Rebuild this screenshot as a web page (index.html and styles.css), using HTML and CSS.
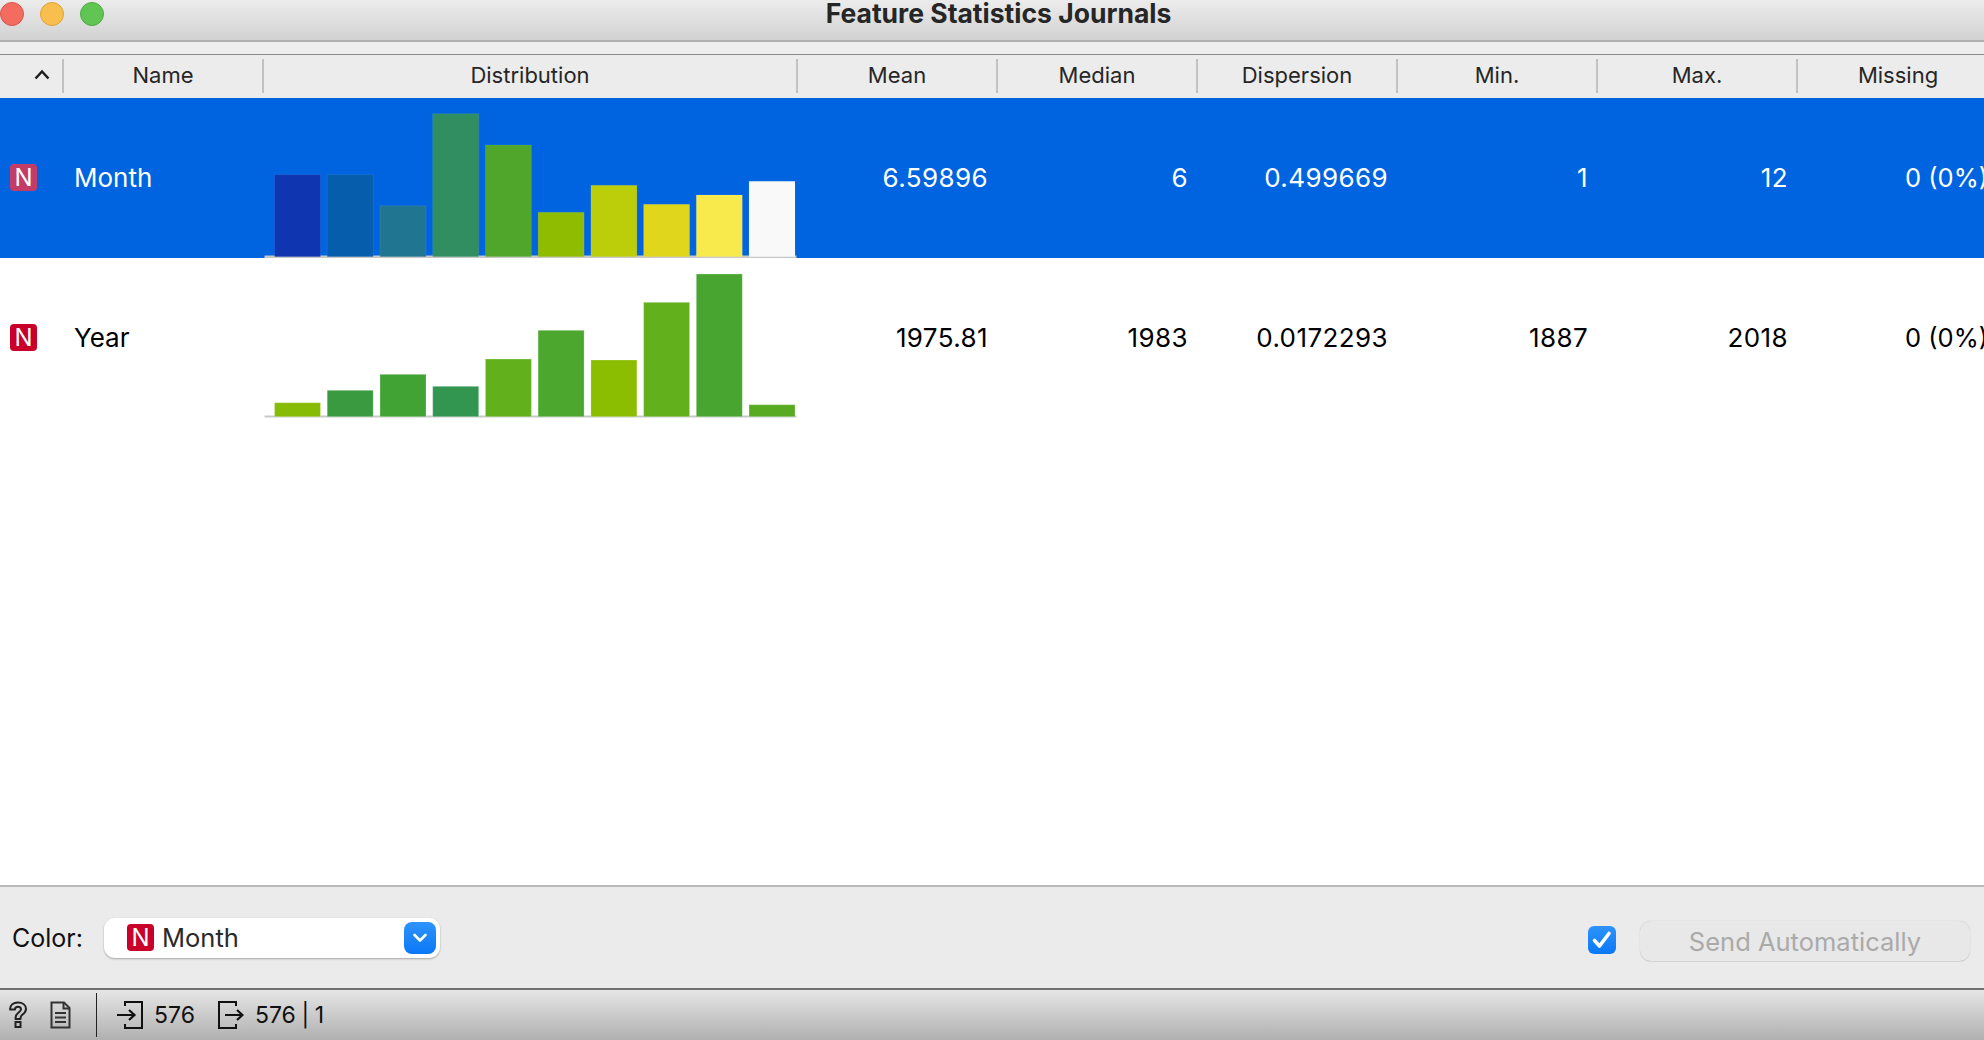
FILE: index.html
```html
<!DOCTYPE html>
<html lang="en">
<head>
<meta charset="utf-8">
<title>Feature Statistics Journals</title>
<link rel="stylesheet" href="styles.css">
</head>
<body>
<div class="window">
  <header class="titlebar">
    <div class="lights">
      <span class="light red"></span>
      <span class="light yellow"></span>
      <span class="light green"></span>
    </div>
    <h1 class="title">Feature Statistics Journals</h1>
  </header>
  <div class="strip"></div>
  <div class="cols thead">
    <div class="th sort"><svg width="16" height="11" viewBox="0 0 16 11"><path d="M1.500 9.500 8 2.500 14.500 9.500" fill="none" stroke="#1c1c1c" stroke-width="2.500"/></svg></div>
    <div class="th">Name</div>
    <div class="th">Distribution</div>
    <div class="th">Mean</div>
    <div class="th">Median</div>
    <div class="th">Dispersion</div>
    <div class="th">Min.</div>
    <div class="th">Max.</div>
    <div class="th">Missing</div>
  </div>
  <main class="tbody">
    <div class="cols row selected">
      <div class="td icon"><span class="badge">N</span></div>
      <div class="td name">Month</div>
      <div class="td dist">
        <svg class="chart" width="534" height="160" viewBox="1 0 534 160">
          <rect class="axis" x="1.500" y="157.500" width="532" height="2.500"/>
          <g class="bars">
            <rect x="11.500" y="76.700" width="46" height="82" fill="#0f35b0"/>
            <rect x="64.200" y="76.700" width="46" height="82" fill="#055dab"/>
            <rect x="117" y="107.700" width="46" height="51" fill="#207590"/>
            <rect x="169.700" y="15.700" width="46" height="143" fill="#308e60"/>
            <rect x="222.400" y="47" width="46" height="111.700" fill="#4fa62a"/>
            <rect x="275.100" y="114.300" width="46" height="44.400" fill="#90bc00"/>
            <rect x="327.900" y="87.300" width="46" height="71.400" fill="#bccd0a"/>
            <rect x="380.600" y="106.300" width="46" height="52.400" fill="#e0d61c"/>
            <rect x="433.300" y="97" width="46" height="61.700" fill="#f8ea4c"/>
            <rect x="486" y="83.300" width="46" height="75.400" fill="#f9f9f9"/>
          </g>
        </svg>
      </div>
      <div class="td num">6.59896</div>
      <div class="td num">6</div>
      <div class="td num">0.499669</div>
      <div class="td num">1</div>
      <div class="td num">12</div>
      <div class="td num missing">0 (0%)</div>
    </div>
    <div class="cols row">
      <div class="td icon"><span class="badge">N</span></div>
      <div class="td name">Year</div>
      <div class="td dist">
        <svg class="chart" width="534" height="160" viewBox="1 0 534 160">
          <rect class="axis" x="1.500" y="157.500" width="532" height="2"/>
          <g class="bars">
            <rect x="11.500" y="144.700" width="46" height="14" fill="#86bc05"/>
            <rect x="64.200" y="132.300" width="46" height="26.400" fill="#3a9a40"/>
            <rect x="117" y="116.300" width="46" height="42.400" fill="#42a335"/>
            <rect x="169.700" y="128.300" width="46" height="30.400" fill="#329550"/>
            <rect x="222.400" y="101" width="46" height="57.700" fill="#62b01c"/>
            <rect x="275.100" y="72.300" width="46" height="86.400" fill="#4ba72d"/>
            <rect x="327.900" y="102" width="46" height="56.700" fill="#8bbd00"/>
            <rect x="380.600" y="44.300" width="46" height="114.400" fill="#62b01c"/>
            <rect x="433.300" y="16" width="46" height="142.700" fill="#47a530"/>
            <rect x="486" y="146.700" width="46" height="12" fill="#58ab20"/>
          </g>
        </svg>
      </div>
      <div class="td num">1975.81</div>
      <div class="td num">1983</div>
      <div class="td num">0.0172293</div>
      <div class="td num">1887</div>
      <div class="td num">2018</div>
      <div class="td num missing">0 (0%)</div>
    </div>
  </main>
  <section class="controls">
    <span class="label">Color:</span>
    <div class="combo">
      <span class="badge">N</span>
      <span class="combo-text">Month</span>
      <span class="combo-btn"><svg width="16" height="10" viewBox="0 0 16 10"><path d="M2.500 2 8 7.500 13.500 2" fill="none" stroke="#fff" stroke-width="2.600" stroke-linecap="round" stroke-linejoin="round"/></svg></span>
    </div>
    <span class="check"><svg width="22" height="20" viewBox="0 0 22 20"><path d="M3.500 10.500 8.500 16 18 3.500" fill="none" stroke="#fff" stroke-width="3.600" stroke-linecap="round" stroke-linejoin="round"/></svg></span>
    <button class="send" type="button" disabled>Send Automatically</button>
  </section>
  <footer class="status">
    <svg class="st-help" width="20" height="28" viewBox="0 0 20 28"><path d="M2 8.500C2 4 5.500 1.500 10 1.500S18 4 18 8C18 11 16 12.500 14 14C12.500 15 12.500 16 12.500 18H7.500C7.500 15 8 13.500 10 12C12 10.500 13 9.800 13 8.300C13 6.800 11.800 5.800 10 5.800S7 7 7 8.500Z" fill="none" stroke="#222" stroke-width="2" stroke-linejoin="round"/><rect x="7.500" y="21" width="5" height="5" fill="none" stroke="#222" stroke-width="2"/></svg>
    <svg class="st-doc" width="21" height="28" viewBox="0 0 21 28"><path d="M1.500 1.500H14L19.500 7V26.500H1.500Z" fill="none" stroke="#333" stroke-width="2"/><path d="M13.500 1.500V7.500H19.500M5 12H16M5 16.500H16M5 21H16" fill="none" stroke="#333" stroke-width="2"/></svg>
    <span class="st-sep"></span>
    <svg class="st-in" width="26" height="28" viewBox="0 0 26 28"><path d="M8 5V1H25V27H8V23" fill="none" stroke="#111" stroke-width="2"/><path d="M0 14H17M12 9 17.500 14 12 19" fill="none" stroke="#111" stroke-width="2.200"/></svg>
    <span class="st-num">576</span>
    <svg class="st-out" width="26" height="28" viewBox="0 0 26 28"><path d="M18 5V1H1V27H18V23" fill="none" stroke="#111" stroke-width="2"/><path d="M7 14H24M19 9 24.500 14 19 19" fill="none" stroke="#111" stroke-width="2.200"/></svg>
    <span class="st-num st-out-num">576 | 1</span>
  </footer>
</div>
</body>
</html>
```

FILE: styles.css
```css
* { box-sizing: border-box; }
html, body { margin: 0; height: 100%; overflow: hidden; background: #fff; }
body { font-family: Inter, "Noto Sans", "Liberation Sans", sans-serif; color: #1c1c1c; }

.window { width: 1997px; height: 1040px; display: flex; flex-direction: column; }

.titlebar {
  height: 42px; flex: none;
  display: grid; grid-template-columns: 1fr auto 1fr; align-items: start;
  background: linear-gradient(#ececec, #d2d2d2);
  border-bottom: 2px solid #b0b0b0;
}
.lights { display: flex; gap: 16px; padding-top: 2px; }
.light { width: 24px; height: 24px; border-radius: 50%; border: 1px solid; }
.red { background: #f46b60; border-color: #d9534a; }
.yellow { background: #f8bf4f; border-color: #dfa235; }
.green { background: #61c554; border-color: #4dab40; }
.title { margin: 0; font-size: 26.500px; font-weight: 700; line-height: 26px; color: #262626; }

.strip { height: 13px; flex: none; background: #eeeeee; border-bottom: 1px solid #8a8a8a; }

.cols { display: grid; grid-template-columns: 64px 200px 534px repeat(6, 200px); flex: none; }

.thead { height: 43px; background: #ececec; padding: 4px 0 5px; }
.th {
  display: flex; align-items: center; justify-content: center;
  padding-bottom: 2px;
  font-size: 22px; color: #262626;
  border-right: 2px solid #c2c2c2;
}
.th:last-child { border-right: 0; }
.sort { padding-left: 22px; padding-bottom: 3px; }

.tbody { flex: 1; min-height: 0; background: #fff; border-bottom: 2px solid #b8b8b8; }
.row { height: 160px; color: #000; }
.row.selected { background: #0064e1; color: #fff; }
.td { display: flex; align-items: center; font-size: 26px; padding-bottom: 1px; }
.icon { padding-left: 10px; }
.name { padding-left: 10px; }
.dist { align-items: stretch; padding-bottom: 0; }
.num { justify-content: flex-end; padding-right: 10px; letter-spacing: .4px; }
.missing { letter-spacing: 0; font-size: 25.500px; }

.badge {
  width: 27px; height: 27px; flex: none; border-radius: 4px;
  display: flex; align-items: center; justify-content: center;
  background: #c8002a; color: #fff; font-size: 24px; line-height: 1;
}
.selected .badge { background: #c33c66; }

.chart { display: block; }
.axis { fill: #c8c8c8; }
.bars rect { stroke: rgba(255, 255, 255, .25); stroke-width: 1; }
.selected .bars rect { stroke: rgba(255, 255, 255, .08); }

.controls {
  height: 101px; flex: none; background: #ebebeb;
  display: flex; align-items: center;
  padding: 0 27px 0 12px;
}
.label { font-size: 25px; color: #111; width: 92px; }
.combo {
  width: 336px; height: 40px; margin-right: auto;
  display: flex; align-items: center;
  padding: 0 4px 0 23px;
  background: #fff; border-radius: 11px;
  box-shadow: 0 1px 2px rgba(0, 0, 0, .3);
}
.combo-text { font-size: 25.500px; color: #2a2a2a; margin-left: 8px; margin-right: auto; }
.combo-btn {
  width: 32px; height: 32px; border-radius: 8px;
  display: flex; align-items: center; justify-content: center;
  background: linear-gradient(#2f93fb, #0a78f6);
}
.check {
  width: 28px; height: 28px; border-radius: 6px; margin-right: 24px; margin-top: 4px;
  display: flex; align-items: center; justify-content: center;
  background: linear-gradient(#2f93fb, #0a78f6);
}
.send {
  width: 330px; height: 40px; margin-top: 7px;
  font: 25.500px Inter, "Noto Sans", sans-serif; color: #aaaaaa;
  background: #e8e8e8; border: 0; border-radius: 11px;
  box-shadow: 0 0 1px rgba(0, 0, 0, .25), 0 1px 1px rgba(0, 0, 0, .08);
}

.status {
  height: 52px; flex: none; display: flex; align-items: center;
  background: linear-gradient(#e6e6e6, #b0b0b0);
  border-top: 2px solid #707070;
  padding-left: 8px;
  font-size: 23px; color: #111;
}
.st-doc { margin-left: 22px; }
.st-sep { width: 1px; height: 44px; background: #222; margin: 0 20px 0 25px; }
.st-num { margin-left: 11px; }
.st-out { margin-left: 23px; }
.st-out-num { word-spacing: -.8px; }
```
